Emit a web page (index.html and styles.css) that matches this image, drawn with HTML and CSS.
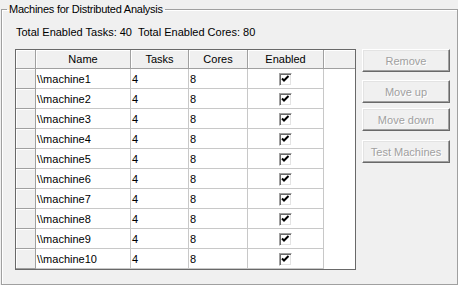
FILE: index.html
```html
<!DOCTYPE html>
<html>
<head>
<meta charset="utf-8">
<link rel="stylesheet" href="styles.css">
</head>
<body>
<fieldset class="group">
  <legend class="legend">Machines for Distributed Analysis</legend>
  <div class="totals">Total Enabled Tasks: 40&nbsp; Total Enabled Cores: 80</div>
  <div class="main">
    <div class="grid">
      <div class="hd"></div><div class="hd">Name</div><div class="hd">Tasks</div><div class="hd">Cores</div><div class="hd">Enabled</div><div class="hd fill"></div>

      <div class="rh"></div><div class="c">\\machine1</div><div class="c">4</div><div class="c">8</div><div class="c chk"><span class="cb"><svg viewBox="0 0 11 11" width="11" height="11"><path d="M2 4.5 L4 6.5 L8.5 2" fill="none" stroke="#000" stroke-width="2"/></svg></span></div><div class="c fill"></div>
      <div class="rh"></div><div class="c">\\machine2</div><div class="c">4</div><div class="c">8</div><div class="c chk"><span class="cb"><svg viewBox="0 0 11 11" width="11" height="11"><path d="M2 4.5 L4 6.5 L8.5 2" fill="none" stroke="#000" stroke-width="2"/></svg></span></div><div class="c fill"></div>
      <div class="rh"></div><div class="c">\\machine3</div><div class="c">4</div><div class="c">8</div><div class="c chk"><span class="cb"><svg viewBox="0 0 11 11" width="11" height="11"><path d="M2 4.5 L4 6.5 L8.5 2" fill="none" stroke="#000" stroke-width="2"/></svg></span></div><div class="c fill"></div>
      <div class="rh"></div><div class="c">\\machine4</div><div class="c">4</div><div class="c">8</div><div class="c chk"><span class="cb"><svg viewBox="0 0 11 11" width="11" height="11"><path d="M2 4.5 L4 6.5 L8.5 2" fill="none" stroke="#000" stroke-width="2"/></svg></span></div><div class="c fill"></div>
      <div class="rh"></div><div class="c">\\machine5</div><div class="c">4</div><div class="c">8</div><div class="c chk"><span class="cb"><svg viewBox="0 0 11 11" width="11" height="11"><path d="M2 4.5 L4 6.5 L8.5 2" fill="none" stroke="#000" stroke-width="2"/></svg></span></div><div class="c fill"></div>
      <div class="rh"></div><div class="c">\\machine6</div><div class="c">4</div><div class="c">8</div><div class="c chk"><span class="cb"><svg viewBox="0 0 11 11" width="11" height="11"><path d="M2 4.5 L4 6.5 L8.5 2" fill="none" stroke="#000" stroke-width="2"/></svg></span></div><div class="c fill"></div>
      <div class="rh"></div><div class="c">\\machine7</div><div class="c">4</div><div class="c">8</div><div class="c chk"><span class="cb"><svg viewBox="0 0 11 11" width="11" height="11"><path d="M2 4.5 L4 6.5 L8.5 2" fill="none" stroke="#000" stroke-width="2"/></svg></span></div><div class="c fill"></div>
      <div class="rh"></div><div class="c">\\machine8</div><div class="c">4</div><div class="c">8</div><div class="c chk"><span class="cb"><svg viewBox="0 0 11 11" width="11" height="11"><path d="M2 4.5 L4 6.5 L8.5 2" fill="none" stroke="#000" stroke-width="2"/></svg></span></div><div class="c fill"></div>
      <div class="rh"></div><div class="c">\\machine9</div><div class="c">4</div><div class="c">8</div><div class="c chk"><span class="cb"><svg viewBox="0 0 11 11" width="11" height="11"><path d="M2 4.5 L4 6.5 L8.5 2" fill="none" stroke="#000" stroke-width="2"/></svg></span></div><div class="c fill"></div>
      <div class="rh"></div><div class="c">\\machine10</div><div class="c">4</div><div class="c">8</div><div class="c chk"><span class="cb"><svg viewBox="0 0 11 11" width="11" height="11"><path d="M2 4.5 L4 6.5 L8.5 2" fill="none" stroke="#000" stroke-width="2"/></svg></span></div><div class="c fill"></div>
    </div>
    <div class="buttons">
      <button class="btn" disabled>Remove</button>
      <button class="btn b2" disabled>Move up</button>
      <button class="btn b3" disabled>Move down</button>
      <button class="btn b4" disabled>Test Machines</button>
    </div>
  </div>
</fieldset>
</body>
</html>
```
FILE: styles.css
```css
html, body {
  margin: 0;
  padding: 0;
  background: #f0f0f0;
}
body {
  width: 458px;
  height: 285px;
  overflow: hidden;
  font: 11px/13px "Liberation Sans", Arial, sans-serif;
  color: #000;
}
.group {
  box-sizing: border-box;
  margin: 3px 0 0 1px;
  padding: 0 0 0 13px;
  width: 457px;
  height: 282px;
  min-width: 0;
  border: 1px solid #a0a0a0;
  box-shadow: inset 1px 1px 0 #fff;
}
.legend {
  margin-left: -8px;
  padding: 0 2px;
  line-height: 13px;
  letter-spacing: -0.25px;
}
.totals {
  margin: 10px 0 0 1px;
  line-height: 13px;
  white-space: nowrap;
}
.main {
  display: flex;
  align-items: flex-start;
  margin-top: 10px;
}
.grid {
  box-sizing: border-box;
  display: grid;
  grid-template-columns: 20px 95px 58px 59px 76px 31px;
  grid-template-rows: 19px repeat(10, 20px);
  width: 341px;
  border: 1px solid #696969;
  background: #fff;
}
.hd {
  box-sizing: border-box;
  background: #f0f0f0;
  border-right: 1px solid #a0a0a0;
  border-bottom: 1px solid #a0a0a0;
  box-shadow: inset 1px 1px 0 #fff;
  text-align: center;
  line-height: 18px;
}
.hd.fill {
  border-right: none;
}
.rh {
  box-sizing: border-box;
  background: #f0f0f0;
  border-right: 1px solid #a0a0a0;
  border-bottom: 1px solid #a0a0a0;
  box-shadow: inset 1px 1px 0 #fff;
}
.c {
  box-sizing: border-box;
  border-right: 1px solid #c8c8c8;
  border-bottom: 1px solid #c8c8c8;
  padding-left: 1px;
  line-height: 18px;
  padding-top: 1px;
  white-space: nowrap;
}
.c.fill {
  border: none;
}
.chk {
  display: flex;
  justify-content: center;
  align-items: center;
  padding: 2px 1px 0 0;
}
.cb {
  box-sizing: border-box;
  display: flex;
  align-items: center;
  justify-content: center;
  width: 13px;
  height: 13px;
  background: #fff;
  border-top: 1px solid #a0a0a0;
  border-left: 1px solid #a0a0a0;
  border-right: 1px solid #fff;
  border-bottom: 1px solid #fff;
  box-shadow: inset 1px 1px 0 #696969, inset -1px -1px 0 #e3e3e3;
}
.cb svg {
  display: block;
}
.buttons {
  display: flex;
  flex-direction: column;
  margin-left: 6px;
}
.btn {
  box-sizing: border-box;
  width: 88px;
  height: 23px;
  padding: 0;
  font: 11px "Liberation Sans", Arial, sans-serif;
  color: #a0a0a0;
  text-shadow: 1px 1px 0 #fff;
  background: #f0f0f0;
  border-top: 1px solid #fff;
  border-left: 1px solid #fff;
  border-right: 1px solid #696969;
  border-bottom: 1px solid #696969;
  box-shadow: inset -1px -1px 0 #a0a0a0, inset 1px 1px 0 #e3e3e3;
}
.b2 { margin-top: 8px; }
.b3 { margin-top: 5px; }
.b4 { margin-top: 9px; }
```
